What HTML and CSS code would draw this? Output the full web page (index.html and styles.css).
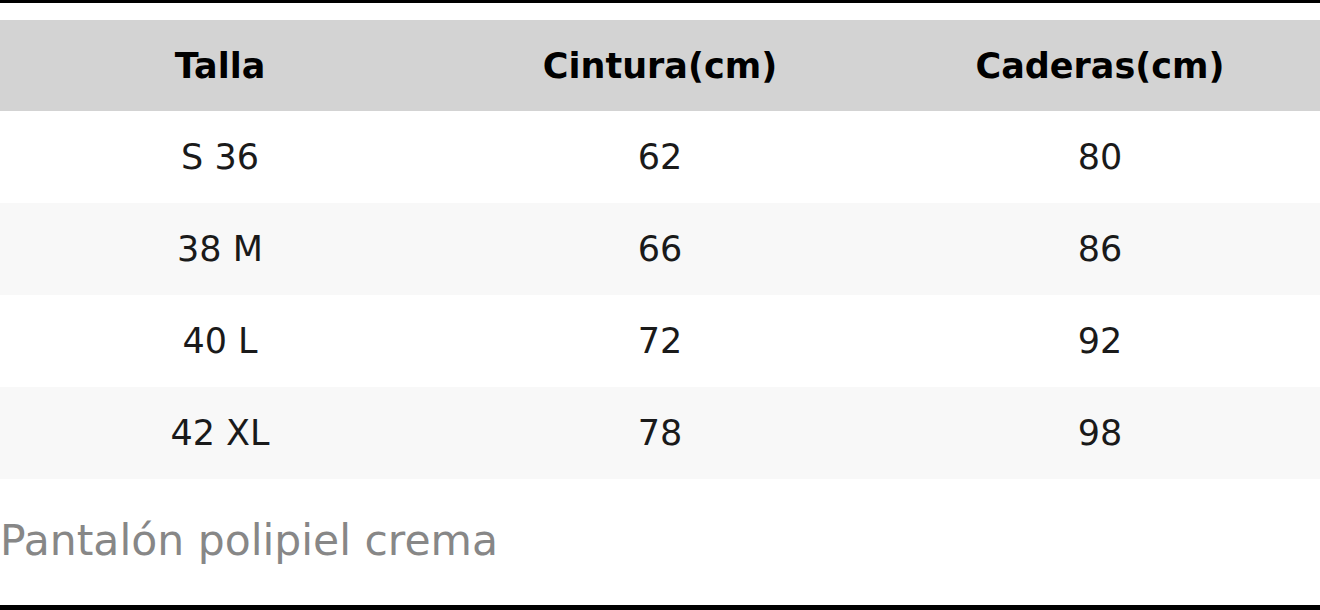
FILE: index.html
```html
<!DOCTYPE html>
<html lang="es">
<head>
<meta charset="utf-8">
<title>Tabla de tallas</title>
<link rel="stylesheet" href="styles.css">
</head>
<body>
<div class="frame">
  <table class="sizes">
    <thead>
      <tr><th>Talla</th><th>Cintura(cm)</th><th>Caderas(cm)</th></tr>
    </thead>
    <tbody>
      <tr><td>S 36</td><td>62</td><td>80</td></tr>
      <tr><td>38 M</td><td>66</td><td>86</td></tr>
      <tr><td>40 L</td><td>72</td><td>92</td></tr>
      <tr><td>42 XL</td><td>78</td><td>98</td></tr>
    </tbody>
  </table>
  <p class="caption">Pantalón polipiel crema</p>
</div>
</body>
</html>
```
FILE: styles.css
```css
html, body {
  margin: 0;
  padding: 0;
  background: #fff;
}
body {
  font-family: "DejaVu Sans", "Liberation Sans", sans-serif;
}
.frame {
  box-sizing: border-box;
  height: 610px;
  border-top: 3px solid #000;
  border-bottom: 5px solid #000;
  padding-top: 17px;
  display: flex;
  flex-direction: column;
}
.sizes {
  width: 100%;
  border-collapse: collapse;
  table-layout: fixed;
  font-size: 35px;
}
.sizes th,
.sizes td {
  padding: 0;
  text-align: center;
  vertical-align: middle;
}
.sizes th {
  height: 91px;
  background: #d3d3d3;
  color: #000;
  font-weight: bold;
}
.sizes td {
  height: 92px;
  color: #1a1a1a;
}
.sizes tbody tr:nth-child(even) td {
  background: #f8f8f8;
}
.caption {
  margin: 37px 0 0 0;
  font-size: 42.5px;
  color: #878787;
}
```
